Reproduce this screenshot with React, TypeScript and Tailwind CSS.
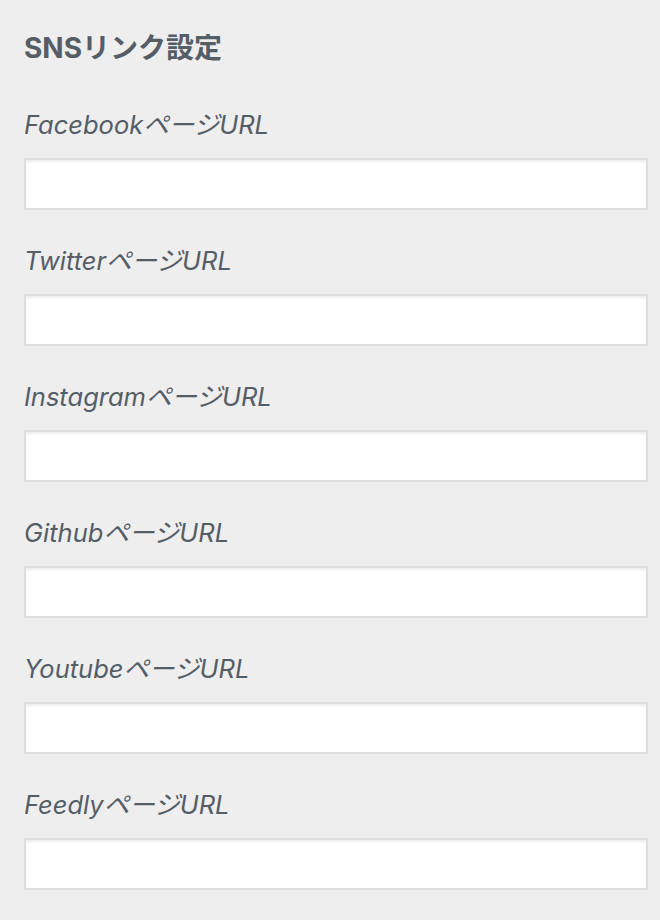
import React from "react";

const items = ["Facebook", "Twitter", "Instagram", "Github", "Youtube", "Feedly"];

export default function App() {
  return (
    <div
      className="min-h-[920px] w-full bg-[#eeeeee] pl-[24px] pr-[12px] pt-[32px] text-[#555d66]"
      style={{ fontFamily: 'Inter, "Noto Sans CJK JP", sans-serif' }}
    >
      <h2 className="m-0 text-[28px] font-bold leading-[32px]">SNSリンク設定</h2>
      <div className="mt-[45px] flex flex-col gap-[35px]">
        {items.map((name) => (
          <label key={name} className="flex flex-col">
            <span className="text-[25.5px] italic leading-[32px]">{name}ページURL</span>
            <input
              type="text"
              className="mt-[17px] h-[52px] w-full border-2 border-[#dddddd] bg-white px-3 shadow-[inset_0_2px_3px_rgba(0,0,0,0.07)] outline-none"
            />
          </label>
        ))}
      </div>
    </div>
  );
}
